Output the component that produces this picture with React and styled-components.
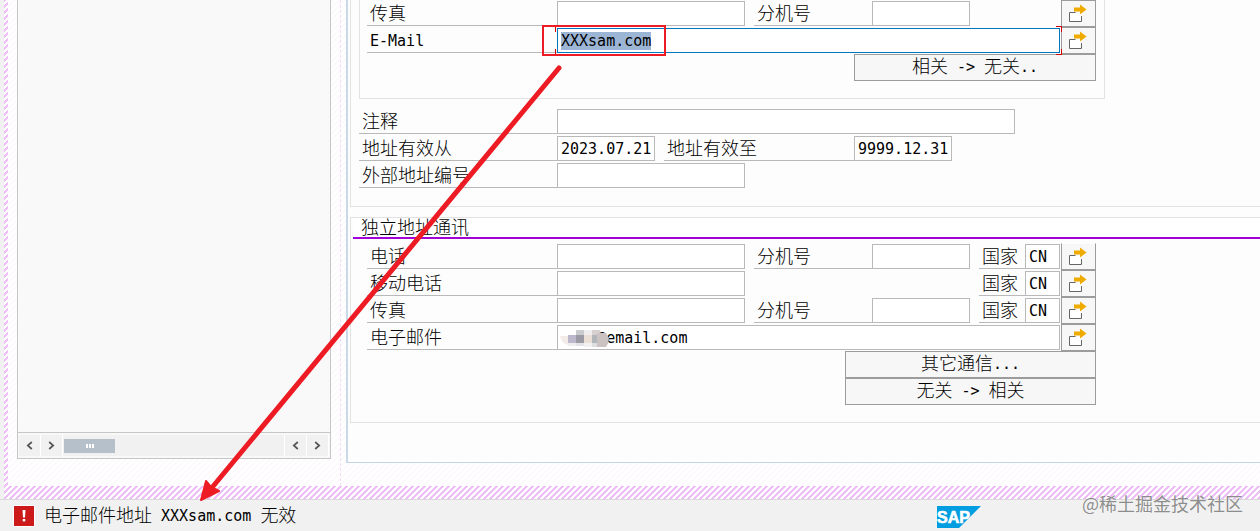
import React, { useEffect, useRef } from 'react';
import styled, { createGlobalStyle } from 'styled-components';

const stripes = (color) => `
  background-image: linear-gradient(135deg, ${color} 25%, transparent 25%, transparent 50%, ${color} 50%, ${color} 75%, transparent 75%);
  background-size: 6px 6px;
`;

const GlobalStyle = createGlobalStyle`
  * { box-sizing: border-box; }
  body {
    margin: 0;
    background: #f1f1f1;
    color: #000;
    font-family: "Noto Sans CJK SC", sans-serif;
    font-size: 18px;
    font-weight: 300;
  }
  button, input { font: inherit; color: inherit; border-radius: 0; }
`;

const Page = styled.div`
  position: relative;
  min-height: 100vh;
  display: flex;
  flex-direction: column;
  overflow: hidden;
`;

const Frame = styled.div`
  flex: 1;
  display: flex;
  margin-left: 4px;
  padding: 0 0 13px 4px;
  background-color: #fff;
  ${stripes('#eebff6')}
`;

const Workspace = styled.div`
  flex: 1;
  min-width: 0;
  display: flex;
  background-color: #fff;
  ${stripes('#fcfafd')}
`;

const Sidebar = styled.aside`
  width: 333px;
  flex-shrink: 0;
  display: flex;
  padding: 0 9px 27px 9px;
  border-right: 1px dashed #f3dcf5;
`;

const Tree = styled.div`
  flex: 1;
  display: flex;
  flex-direction: column;
  justify-content: flex-end;
  background: #f9f9f9;
  border: 1px solid #c6c6c6;
  border-top: none;
`;

const ScrollBar = styled.div`
  height: 26px;
  display: flex;
  align-items: center;
  padding: 2px 1px;
  background: #f8f8f8;
  border-top: 1px solid #c6c6c6;
`;

const ScrollButton = styled.button`
  width: 22px;
  height: 21px;
  padding: 0;
  display: flex;
  align-items: center;
  justify-content: center;
  background: #f1f1f1;
  border: none;
  border-right: 1px solid #fff;
`;

const ScrollTrack = styled.div`
  flex: 1;
  height: 21px;
  padding: 4px 1px;
  background: #f1f1f1;
  border-right: 1px solid #fff;
`;

const ScrollThumb = styled.div`
  width: 51px;
  height: 14px;
  display: flex;
  align-items: center;
  justify-content: center;
  gap: 1px;
  background: #b5c0cb;
  i { width: 2px; height: 4px; background: #fff; }
`;

const Main = styled.main`
  flex: 1;
  min-width: 0;
  margin: 0 0 23px 5px;
  padding: 0 0 39px 2px;
  background: #fdfdfd;
  border-left: 2px solid #c9d9e8;
  border-bottom: 1px solid #c4d6e6;
`;

const Group = styled.section`
  border: 1px solid #e2e2e2;
  border-right: none;
  & + & { margin-top: 10px; }
`;

const AddressGroup = styled(Group)`
  border-top: none;
  padding: 0 0 17px 8px;
`;

const NestedBox = styled.div`
  width: 746px;
  margin-bottom: 9px;
  padding: 0 8px 17px 7px;
  border: 1px solid #e2e2e2;
  border-top: none;
`;

const GroupTitle = styled.h2`
  margin: 0 0 4px 2px;
  padding-left: 8px;
  height: 21px;
  line-height: 17px;
  font-size: 18px;
  font-weight: 300;
  background: #fff;
  border-bottom: 2px solid #a300d9;
`;

const GroupBody = styled.div`
  width: 745px;
  padding: 0 0 17px 16px;
`;

const Row = styled.div`
  height: 27px;
  display: flex;
  align-items: center;
  justify-content: ${({ $end }) => ($end ? 'flex-end' : 'flex-start')};
`;

const Label = styled.label`
  width: ${({ $w }) => $w}px;
  height: 25px;
  margin-left: ${({ $gap }) => $gap || 0}px;
  padding-left: 3px;
  flex-shrink: 0;
  line-height: 22px;
  white-space: nowrap;
  border-bottom: 1px solid #b9b9b9;
`;

const Mono = styled.span`
  font-family: "DejaVu Sans Mono", monospace;
  font-size: 15px;
  font-weight: 400;
  line-height: 1;
  vertical-align: 1px;
  color: #000;
  white-space: pre;
`;

const Input = styled.input`
  width: ${({ $w }) => ($w ? `${$w}px` : '100%')};
  height: 25px;
  padding: 0 0 0 3px;
  font-family: "DejaVu Sans Mono", monospace;
  font-size: 15px;
  font-weight: 400;
  color: #000;
  background: #fff;
  border: 1px solid ${({ $active }) => ($active ? '#0076bf' : '#b9b9b9')};
  outline: none;
  &::selection { background: rgba(155, 180, 211, 0.99); color: #000; }
`;

const Field = styled.div`
  position: relative;
  display: flex;
  width: 503px;
  height: 25px;
`;

const Corner = styled.span`
  position: absolute;
  width: 6px;
  height: 6px;
  ${({ $x }) => ($x === 'left' ? 'left: -2px; border-left: 1px solid #d40000;' : 'right: -2px; border-right: 1px solid #d40000;')}
  ${({ $y }) => ($y === 'top' ? 'top: -2px;' : 'bottom: -2px;')}
  ${({ $x, $y }) => $x === 'right' && `border-${$y}: 1px solid #d40000;`}
`;

const Highlight = styled.span`
  position: absolute;
  left: -15px;
  top: -3px;
  width: 124px;
  height: 31px;
  border: 2px solid #ed1c24;
  pointer-events: none;
`;

const Mosaic = styled.svg`
  position: absolute;
  left: 3px;
  top: 4px;
`;

const IconButton = styled.button`
  width: 35px;
  height: 27px;
  margin-left: ${({ $gap }) => $gap || 1}px;
  padding: 0;
  display: flex;
  align-items: center;
  justify-content: center;
  background: #f7f7f7;
  border: 1px solid #9c9c9c;
  ${({ $cut }) => $cut && 'border-top-color: #fdfdfd;'}
`;

const Button = styled.button`
  width: ${({ $w }) => $w}px;
  height: 27px;
  padding: 0 0 4px;
  line-height: 21px;
  background: #f7f7f7;
  border: 1px solid #9c9c9c;
`;

const StatusBar = styled.footer`
  position: relative;
  height: 32px;
  display: flex;
  align-items: center;
  padding-left: 13px;
  background: #f1f1f1;
  border-top: 1px solid #d9d9d9;
`;

const Message = styled.p`
  flex: 1;
  margin: 0 0 4px 9px;
  line-height: 24px;
`;

const Logo = styled.svg`
  margin: 3px 279px 0 0;
`;

const Watermark = styled.span`
  position: absolute;
  right: 17px;
  top: -10px;
  line-height: 26px;
  font-weight: 400;
  color: rgba(110, 110, 110, 0.8);
  text-shadow: 0 0 1px #fff;
`;

const Arrow = styled.svg`
  position: absolute;
  left: 0;
  top: 0;
  pointer-events: none;
`;

function Chevron({ right }) {
  return (
    <svg width="7" height="9" viewBox="0 0 7 9" fill="none" stroke="#555" strokeWidth="1.7">
      <path d={right ? 'M1.2 1L5.2 4.5L1.2 8' : 'M5.8 1L1.8 4.5L5.8 8'} />
    </svg>
  );
}

function DetailButton({ gap, cut }) {
  return (
    <IconButton type="button" aria-label="更多" $gap={gap} $cut={cut}>
      <svg width="19" height="19" viewBox="0 0 19 19">
        <path d="M1 9H13V17H1Z" fill="#fff" />
        <path d="M6.5 8.5H0.5V17.5H12.5V12" fill="none" stroke="#666" />
        <path d="M5 3.5H11V0.5L17.5 5.5L11 10.5V7.5H5Z" fill="#f0ab00" />
      </svg>
    </IconButton>
  );
}

function Country({ id, gap }) {
  return (
    <>
      <Label htmlFor={id} $w={46} $gap={gap}>国家</Label>
      <Input id={id} $w={35} defaultValue="CN" />
    </>
  );
}

function EmailField() {
  const ref = useRef(null);

  useEffect(() => {
    ref.current.focus();
    ref.current.select();
  }, []);

  return (
    <Field>
      <Input id="email" ref={ref} $active defaultValue="XXXsam.com" />
      <Corner $x="left" $y="top" />
      <Corner $x="left" $y="bottom" />
      <Corner $x="right" $y="top" />
      <Corner $x="right" $y="bottom" />
      <Highlight />
    </Field>
  );
}

export default function App() {
  return (
    <Page>
      <GlobalStyle />
      <Frame>
        <Workspace>
          <Sidebar>
            <Tree>
              <ScrollBar>
                <ScrollButton type="button" aria-label="左"><Chevron /></ScrollButton>
                <ScrollButton type="button" aria-label="右"><Chevron right /></ScrollButton>
                <ScrollTrack>
                  <ScrollThumb><i /><i /><i /></ScrollThumb>
                </ScrollTrack>
                <ScrollButton type="button" aria-label="左"><Chevron /></ScrollButton>
                <ScrollButton type="button" aria-label="右"><Chevron right /></ScrollButton>
              </ScrollBar>
            </Tree>
          </Sidebar>

          <Main>
            <AddressGroup>
              <NestedBox>
                <Row>
                  <Label htmlFor="fax" $w={190}>传真</Label>
                  <Input id="fax" $w={188} />
                  <Label htmlFor="faxExt" $w={118} $gap={9}>分机号</Label>
                  <Input id="faxExt" $w={98} />
                  <DetailButton gap={91} />
                </Row>
                <Row>
                  <Label htmlFor="email" $w={190}><Mono>E-Mail</Mono></Label>
                  <EmailField />
                  <DetailButton />
                </Row>
                <Row $end>
                  <Button type="button" $w={242}>相关<Mono>{' -> '}</Mono>无关<Mono>..</Mono></Button>
                </Row>
              </NestedBox>
              <Row>
                <Label htmlFor="note" $w={198}>注释</Label>
                <Input id="note" $w={458} />
              </Row>
              <Row>
                <Label htmlFor="validFrom" $w={198}>地址有效从</Label>
                <Input id="validFrom" $w={98} defaultValue="2023.07.21" />
                <Label htmlFor="validTo" $w={190} $gap={9}>地址有效至</Label>
                <Input id="validTo" $w={98} defaultValue="9999.12.31" />
              </Row>
              <Row>
                <Label htmlFor="extNo" $w={198}>外部地址编号</Label>
                <Input id="extNo" $w={188} />
              </Row>
            </AddressGroup>

            <Group>
              <GroupTitle>独立地址通讯</GroupTitle>
              <GroupBody>
                <Row>
                  <Label htmlFor="tel" $w={190}>电话</Label>
                  <Input id="tel" $w={188} />
                  <Label htmlFor="telExt" $w={118} $gap={9}>分机号</Label>
                  <Input id="telExt" $w={98} />
                  <Country id="telCountry" gap={9} />
                  <DetailButton cut />
                </Row>
                <Row>
                  <Label htmlFor="mobile" $w={190}>移动电话</Label>
                  <Input id="mobile" $w={188} />
                  <Country id="mobileCountry" gap={234} />
                  <DetailButton />
                </Row>
                <Row>
                  <Label htmlFor="fax2" $w={190}>传真</Label>
                  <Input id="fax2" $w={188} />
                  <Label htmlFor="fax2Ext" $w={118} $gap={9}>分机号</Label>
                  <Input id="fax2Ext" $w={98} />
                  <Country id="faxCountry" gap={9} />
                  <DetailButton />
                </Row>
                <Row>
                  <Label htmlFor="mail2" $w={190}>电子邮件</Label>
                  <Field>
                    <Input id="mail2" defaultValue="    @email.com" />
                    <Mosaic width="50" height="18" viewBox="0 0 50 18">
                      <path d="M0 7H8V16Q1 14 0 7Z" fill="#f3ebe7" />
                      <rect x="8" y="6" width="8" height="8" fill="#bdb8cc" />
                      <rect x="8" y="14" width="8" height="3" fill="#efedf0" />
                      <rect x="16" y="1" width="8" height="6" fill="#c9cbcd" />
                      <rect x="16" y="6" width="8" height="8" fill="#9c9ba5" />
                      <rect x="16" y="14" width="8" height="3" fill="#e4e4e8" />
                      <rect x="24" y="1" width="8" height="6" fill="#f0eeee" />
                      <rect x="24" y="6" width="8" height="8" fill="#ecdfd5" />
                      <rect x="24" y="14" width="8" height="4" fill="#f2f0f0" />
                      <rect x="32" y="1" width="8" height="6" fill="#d8d0d0" />
                      <rect x="32" y="6" width="8" height="8" fill="#b1b6ba" />
                      <rect x="32" y="14" width="8" height="4" fill="#dedede" />
                      <path d="M37 4H46L49 9Q49 14 46 18H37Z" fill="#cbc2c2" />
                    </Mosaic>
                  </Field>
                  <DetailButton />
                </Row>
                <Row $end>
                  <Button type="button" $w={251}>其它通信<Mono>...</Mono></Button>
                </Row>
                <Row $end>
                  <Button type="button" $w={251}>无关<Mono>{' -> '}</Mono>相关</Button>
                </Row>
              </GroupBody>
            </Group>
          </Main>
        </Workspace>
      </Frame>

      <StatusBar>
        <svg width="22" height="22" viewBox="0 0 22 22">
          <rect width="22" height="22" fill="#fff" />
          <rect x="1" y="1" width="20" height="20" fill="#cc1919" />
          <path d="M9.5 5H12.5L12 12.5H10Z" fill="#fff" />
          <rect x="9.7" y="14" width="2.6" height="2.4" fill="#fff" />
        </svg>
        <Message>电子邮件地址<Mono>{' XXXsam.com '}</Mono>无效</Message>
        <Logo width="44" height="22" viewBox="0 0 44 22" role="img" aria-label="SAP">
          <path d="M0 0H44L22 22H0Z" fill="#009de0" />
          <text x="0" y="17" fill="#fff" fontFamily="Liberation Sans, sans-serif" fontWeight="700" fontSize="16" stroke="#fff" strokeWidth="0.6">SAP</text>
        </Logo>
        <Watermark>@稀土掘金技术社区</Watermark>
      </StatusBar>

      <Arrow width="700" height="531" viewBox="0 0 700 531">
        <path d="M559 68L210 490" stroke="#ed1c24" strokeWidth="5" strokeLinecap="round" />
        <path d="M201 500L206 481L211 487L219 491Z" fill="#ed1c24" stroke="#ed1c24" strokeWidth="2" strokeLinejoin="round" />
      </Arrow>
    </Page>
  );
}
